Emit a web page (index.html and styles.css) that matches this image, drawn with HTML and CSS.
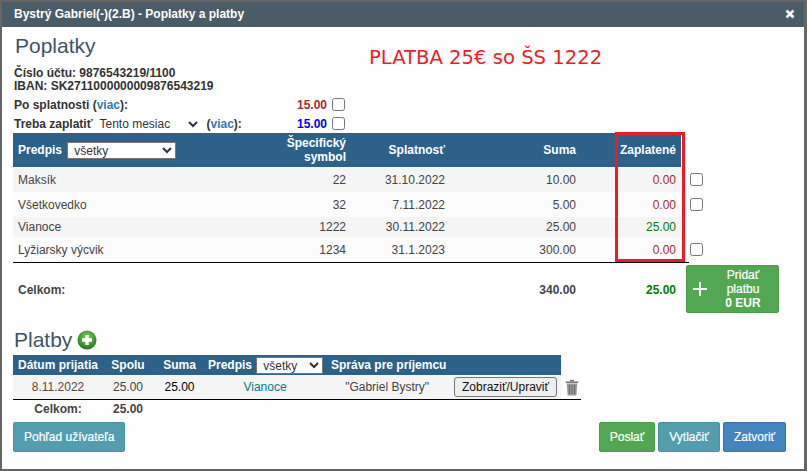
FILE: index.html
```
<!DOCTYPE html>
<html lang="sk">
<head>
<meta charset="utf-8">
<title>Poplatky a platby</title>
<link rel="stylesheet" href="styles.css">
</head>
<body>
<div class="dialog">
  <header class="titlebar">
    <span>Bystrý Gabriel(-)(2.B) - Poplatky a platby</span>
    <svg class="close" width="10" height="10" viewBox="0 0 10 10"><path d="M1.5 1.5l7 7M8.5 1.5l-7 7" stroke="#fff" stroke-width="2.6"/></svg>
  </header>
  <main class="content">
    <div class="note">PLATBA 25€ so ŠS 1222</div>
    <div class="highlight"></div>
    <h2 class="heading fees-heading">Poplatky</h2>
    <div class="account">Číslo účtu: 9876543219/1100<br>IBAN: SK2711000000009876543219</div>
    <div class="info first">
      <span class="info-label">Po splatnosti (<a class="link">viac</a>):</span>
      <span class="amt dark-red">15.00</span><input type="checkbox" class="check">
    </div>
    <div class="info second">
      <span class="info-label">Treba zaplatiť<select class="period"><option>Tento mesiac</option></select>(<a class="link">viac</a>):</span>
      <span class="amt blue">15.00</span><input type="checkbox" class="check">
    </div>
    <table class="fees">
      <colgroup><col class="c1"><col class="c2"><col class="c3"><col class="c4"><col class="c5"><col class="c6"></colgroup>
      <thead>
        <tr>
          <th class="left">Predpis <select class="filter"><option>všetky</option></select></th>
          <th>Špecifický<br>symbol</th><th>Splatnosť</th><th>Suma</th><th>Zaplatené</th><th class="blank"></th>
        </tr>
      </thead>
      <tbody>
        <tr class="r-tall odd"><td class="left">Maksík</td><td>22</td><td>31.10.2022</td><td>10.00</td><td class="dark-red">0.00</td><td class="blank"><input type="checkbox" class="check"></td></tr>
        <tr class="r-tall even"><td class="left">Všetkovedko</td><td>32</td><td>7.11.2022</td><td>5.00</td><td class="dark-red">0.00</td><td class="blank"><input type="checkbox" class="check"></td></tr>
        <tr class="r-short odd"><td class="left">Vianoce</td><td>1222</td><td>30.11.2022</td><td>25.00</td><td class="green">25.00</td><td class="blank"></td></tr>
        <tr class="r-tall even last"><td class="left">Lyžiarsky výcvik</td><td>1234</td><td>31.1.2023</td><td>300.00</td><td class="dark-red">0.00</td><td class="blank"><input type="checkbox" class="check"></td></tr>
      </tbody>
      <tfoot>
        <tr>
          <td class="left strong">Celkom:</td><td></td><td></td><td class="strong">340.00</td><td class="green strong">25.00</td>
          <td class="blank">
            <button class="add-pay"><svg width="16" height="16" viewBox="0 0 16 16"><path d="M8 1v14M1 8h14" stroke="#fff" stroke-width="2"/></svg><span>Pridať<br>platbu<br><b>0 EUR</b></span></button>
          </td>
        </tr>
      </tfoot>
    </table>
    <h2 class="heading pay-heading">Platby
      <svg class="plus-icon" width="20" height="20" viewBox="0 0 20 20">
        <defs><radialGradient id="g" cx="50%" cy="35%" r="65%"><stop offset="0" stop-color="#7fce5a"/><stop offset="1" stop-color="#1f7a14"/></radialGradient></defs>
        <circle cx="10" cy="10" r="9.5" fill="url(#g)"/><path d="M10 5v10M5 10h10" stroke="#fff" stroke-width="3.4"/>
      </svg>
    </h2>
    <table class="payments">
      <colgroup><col class="p1"><col class="p2"><col class="p3"><col class="p4"><col class="p5"><col class="p6"></colgroup>
      <thead>
        <tr>
          <th class="center">Dátum prijatia</th><th class="center">Spolu</th><th class="center">Suma</th>
          <th class="left">Predpis <select class="filter small"><option>všetky</option></select></th>
          <th class="left">Správa pre príjemcu</th><th class="blank"></th>
        </tr>
      </thead>
      <tbody>
        <tr class="pay-row">
          <td class="center date">8.11.2022</td><td class="center">25.00</td><td class="center black">25.00</td>
          <td class="center teal pay-name">Vianoce</td>
          <td><div class="msg"><span class="msg-text">"Gabriel Bystry"</span><button class="edit">Zobraziť/Upraviť</button></div></td>
          <td class="blank trash-cell">
            <svg width="14" height="17" viewBox="0 0 14 17"><path d="M5 1.5h4M.8 3.2h12.4" stroke="#777" stroke-width="1.6"/><path d="M1.8 4.5h10.4l-.8 12H2.6z" fill="#999"/><path d="M4.4 6v9M7 6v9M9.6 6v9" stroke="#666" stroke-width="1"/></svg>
          </td>
        </tr>
      </tbody>
      <tfoot>
        <tr><td class="center strong">Celkom:</td><td class="center strong">25.00</td><td colspan="4"></td></tr>
      </tfoot>
    </table>
    <div class="actions">
      <button class="btn info-btn">Pohľad užívateľa</button>
      <div class="actions-right">
        <button class="btn green-btn">Poslať</button>
        <button class="btn info-btn">Vytlačiť</button>
        <button class="btn blue-btn">Zatvoriť</button>
      </div>
    </div>
  </main>
</div>
</body>
</html>
```
FILE: styles.css
```
* { box-sizing: border-box; }
html, body { margin: 0; height: 100%; }
body {
  background: #666;
  padding: 2px 3px 2px 2px;
  font-family: "Liberation Sans", Arial, sans-serif;
  font-size: 12px;
  color: #444;
  overflow: hidden;
}
.dialog { background: #fff; height: 467px; }
.titlebar {
  height: 25px;
  background: #4a5c68;
  color: #fff;
  font-weight: bold;
  display: flex;
  align-items: center;
  justify-content: space-between;
  padding: 0 9px 2px 12px;
}
.close { margin-top: 1px; }
.content { position: relative; padding: 0 11px; height: 442px; }
.note {
  position: absolute;
  left: 367px;
  top: 20px;
  font-family: "DejaVu Sans", Verdana, sans-serif;
  font-size: 19.6px;
  line-height: 22px;
  color: #f01c24;
  white-space: nowrap;
}
.highlight {
  position: absolute;
  left: 613px;
  top: 105px;
  width: 70px;
  height: 130px;
  border: 3px solid #ed1c24;
  z-index: 2;
}
.heading { margin: 0; font-weight: normal; font-size: 21px; line-height: 24px; color: #3f5564; }
.fees-heading { padding: 7px 0 0 2px; height: 40px; }
.account { font-weight: bold; line-height: 13px; padding-left: 1px; height: 26px; color: #333; }
.info { display: flex; align-items: center; width: 332px; padding-left: 1px; font-weight: bold; color: #333; }
.info.first { height: 19px; margin-top: 2px; }
.info.second { height: 19px; }
.info-label { flex: 1; white-space: nowrap; }
.link { color: #337ab7; font-weight: bold; }
.amt { font-weight: bold; margin-right: 5px; }
.period {
  width: 106px;
  height: 18px;
  margin: 0 5px 0 3px;
  border: 0;
  background: #fff;
  font: 12px "Liberation Sans", Arial, sans-serif;
  color: #333;
  padding: 0;
}
.check {
  width: 13px;
  height: 13px;
  margin: 0;
  display: block;
  flex: none;
}
.dark-red { color: #a52a2a; }
.blue { color: #0000ff; }
.green { color: #008000; }
.teal { color: #008080; }
.black { color: #000; }
table { border-collapse: collapse; table-layout: fixed; border-spacing: 0; }
.fees { width: 676px; }
.c1 { width: 253px; } .c2 { width: 85px; } .c3 { width: 99px; } .c4 { width: 131px; } .c5 { width: 100px; } .c6 { width: 8px; }
th, td { padding: 0 5px; text-align: right; white-space: nowrap; font-size: 12px; }
.fees thead tr { height: 34px; }
th { background: #2c6289; color: #fff; font-weight: bold; line-height: 14px; }
th.left, td.left { text-align: left; }
th.center, td.center { text-align: center; }
th.blank, td.blank { background: #fff; padding: 0; text-align: left; }
.filter {
  width: 109px;
  height: 17px;
  margin-left: 2px;
  font: 12px "Liberation Sans", Arial, sans-serif;
  color: #333;
  background: #fff;
  border: 1px solid #777;
  border-radius: 0;
  padding: 0 0 0 2px;
  vertical-align: middle;
}
.filter.small { width: 67px; margin-left: 1px; }
.r-tall { height: 25px; }
.r-short { height: 20px; }
.odd td { background: #f5f5f5; }
.even td { background: #fcfcfc; }
.odd td.blank, .even td.blank { background: #fff; }
.fees .check { margin-left: 9px; }
.last td { border-bottom: 1px solid #000; padding-top: 1px; }
.fees tfoot tr { height: 52px; }
.fees tfoot td { padding-top: 3px; }
.fees tfoot td.blank { padding-top: 0; }
.strong { font-weight: bold; }
.add-pay {
  display: flex;
  align-items: center;
  width: 93px;
  height: 48px;
  margin: 2px 0 0 5px;
  padding: 0 0 0 5px;
  background: #52a852;
  border: 1px solid #4c9c4c;
  border-radius: 2px;
  color: #fff;
  font: 12px/14px "Liberation Sans", Arial, sans-serif;
  -webkit-text-stroke: 0.2px #fff;
}
.add-pay span { flex: 1; text-align: center; padding-right: 2px; padding-left: 2px; }
.add-pay b { font-weight: bold; -webkit-text-stroke: 0; }
.pay-heading { display: flex; align-items: center; gap: 5px; height: 26px; margin-top: 14px; padding: 0 0 2px 1px; }
.payments { width: 568px; margin-top: 1px; }
.p1 { width: 90px; } .p2 { width: 50px; } .p3 { width: 53px; } .p4 { width: 123px; } .p5 { width: 232px; } .p6 { width: 20px; }
.payments thead tr { height: 20px; }
.payments th { padding: 0 2px; }
.pay-row { height: 24px; }
.pay-row td { background: #f5f5f5; border-bottom: 1px solid #000; padding: 0; }
.pay-row td.blank { background: #fff; }
.pay-row td.pay-name { padding-right: 5px; }
.date { color: #5a4a3a; }
.msg { display: flex; align-items: center; justify-content: flex-end; height: 24px; }
.msg-text { margin-right: 25px; }
.edit {
  width: 103px;
  height: 20px;
  margin-right: 4px;
  padding: 0;
  background: #efefef;
  border: 1px solid #767676;
  border-radius: 3px;
  color: #111;
  font: 12px "Liberation Sans", Arial, sans-serif;
}
.trash-cell svg { display: block; margin-left: 4px; }
.payments tfoot tr { height: 18px; }
.actions { display: flex; justify-content: space-between; margin-top: 4px; padding-right: 7px; }
.actions-right { display: flex; gap: 3px; }
.btn {
  height: 30px;
  padding: 0 10px;
  border-radius: 2px;
  color: #fff;
  font: 12px "Liberation Sans", Arial, sans-serif;
  -webkit-text-stroke: 0.2px #fff;
  border: 1px solid transparent;
}
.info-btn { background: #529eae; border-color: #4a93a3; }
.green-btn { background: #52a852; border-color: #4c9c4c; width: 56px; padding: 0; }
.actions-right .info-btn { width: 62px; padding: 0; }
.blue-btn { background: #4285bf; border-color: #3a72a3; width: 63px; padding: 0; }
```
